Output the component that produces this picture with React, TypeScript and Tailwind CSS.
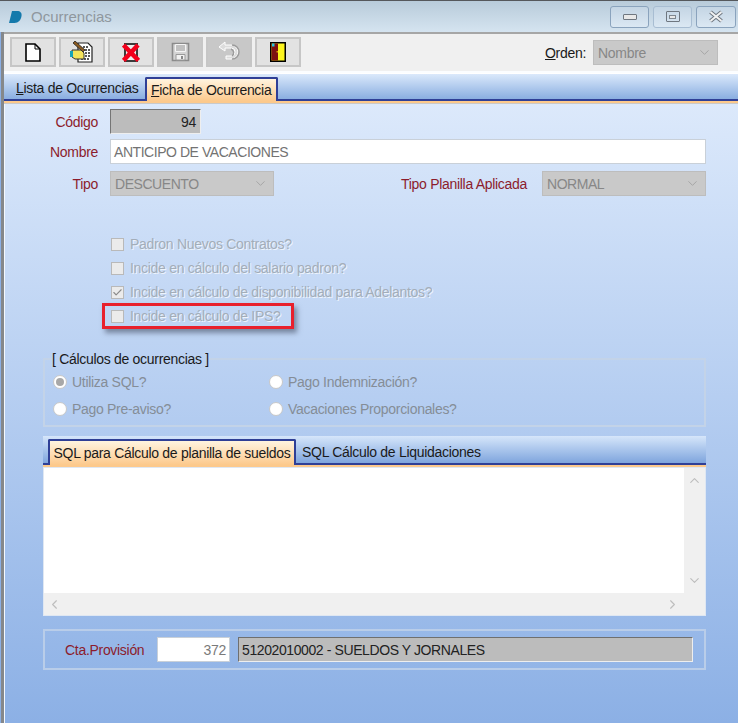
import { ChevronDown, ChevronUp, ChevronLeft, ChevronRight, Check } from "lucide-react";

function ToolButton({ disabled, children }: { disabled?: boolean; children: React.ReactNode }) {
  return (
    <div
      className={`w-[46px] h-[30px] flex items-center justify-center border-2 border-[#c6c6c6] ${
        disabled ? "bg-[#c8c8c8]" : "bg-[#e2e2e2]"
      }`}
    >
      {children}
    </div>
  );
}

function NewIcon() {
  return (
    <svg width="16" height="19" viewBox="0 0 16 19">
      <path d="M1 1h9l5 5v12H1z" fill="#fff" stroke="#000" strokeWidth="1.6" />
      <path d="M10 1v5h5" fill="none" stroke="#000" strokeWidth="1" />
    </svg>
  );
}

function EditIcon() {
  return (
    <svg width="24" height="22" viewBox="0 0 24 22">
      <path d="M8 2h10l4 4v15H8z" fill="#fff" stroke="#222" strokeWidth="1.2" />
      <path d="M13 6h5M15 9h5M15 12h5M15 15h5M11 18h9" stroke="#222" strokeWidth="1.3" strokeDasharray="2 1" />
      <path d="M5 0l10 9-2 2L3 2z" fill="#8a5a20" stroke="#222" strokeWidth="0.8" />
      <path d="M2 9h9l3 3v6H5l-3-2z" fill="#f4e35a" stroke="#333" strokeWidth="1" />
      <path d="M0 10h3v6H0z" fill="#16a3b8" />
    </svg>
  );
}

function DeleteIcon() {
  return (
    <svg width="18" height="21" viewBox="0 0 18 21">
      <path d="M2 1h14v19H2z" fill="#3b3b3b" />
      <path d="M4 3h10v15H4z" fill="#eee" />
      <path d="M1.5 3L16.5 18.5M16 3L1.5 18.5" stroke="#f2001c" strokeWidth="4.6" />
    </svg>
  );
}

function SaveIcon() {
  return (
    <svg width="19" height="20" viewBox="0 0 19 20">
      <path d="M1.5 1.5h16v17h-16z" fill="#d4d4d4" stroke="#8b8b8b" strokeWidth="1.6" />
      <path d="M4.5 2.5h10v7h-10z" fill="#c0c0c0" stroke="#f4f4f4" strokeWidth="1" />
      <path d="M5 12.5h9v5.5H5z" fill="#f2f2f2" stroke="#9a9a9a" strokeWidth="1" />
      <path d="M10 14h2v3h-2z" fill="#888" />
    </svg>
  );
}

function UndoIcon() {
  return (
    <svg width="22" height="22" viewBox="0 0 22 22">
      <path d="M1 6l6-5v3h6a7 7 0 0 1 0 14H8v-3h5a4 4 0 0 0 0-8H7v3z" fill="#dcdcdc" stroke="#fff" strokeWidth="1" />
      <path d="M14 4a7 7 0 0 1 0 14M13 8a4 4 0 0 1 1 7" fill="none" stroke="#9b9b9b" strokeWidth="1.4" />
    </svg>
  );
}

function DoorIcon() {
  return (
    <svg width="16" height="20" viewBox="0 0 16 20">
      <path d="M0 0h16v20H0z" fill="#000" />
      <path d="M1.5 1.5h13v17h-13z" fill="#fdf51e" />
      <path d="M1.5 1.5h6.5v17H1.5z" fill="#7d1010" />
      <path d="M2 1.5h2.5v3H2z" fill="#27c6dc" />
      <path d="M6.5 9h1.5v1.5H6.5z" fill="#e0a000" />
    </svg>
  );
}

function Logo() {
  return (
    <svg width="13" height="14" viewBox="0 0 13 14">
      <path d="M3 1h5c3.5 0 5 2 4.5 5-.6 4-3 7-7 7H0z" fill="#1479ab" />
    </svg>
  );
}

function FakeSelect({ text, className }: { text: string; className: string }) {
  return (
    <div className={`h-[25px] flex items-center justify-between pl-[4px] pr-[5px] bg-[#c9c9c9] border border-[#bdbdbd] text-[#878787] ${className}`}>
      <span>{text}</span>
      <ChevronDown size={15} strokeWidth={1.2} color="#9a9a9a" />
    </div>
  );
}

function CheckRow({ text, checked }: { text: string; checked?: boolean }) {
  return (
    <div className="h-[24px] flex items-center gap-[6px] text-[#a3adb9] [text-shadow:1px_1px_0_#eef4fc]">
      <div className="w-[13px] h-[13px] flex items-center justify-center bg-[#ebebeb] border border-[#b9b9b9]">
        {checked && <Check size={11} strokeWidth={2.4} color="#8a8a8a" />}
      </div>
      <span>{text}</span>
    </div>
  );
}

function Radio({ text, selected, className }: { text: string; selected?: boolean; className?: string }) {
  return (
    <div className={`h-[14px] flex items-center gap-[5px] text-[#858d97] ${className ?? ""}`}>
      <div className="w-[14px] h-[14px] rounded-full bg-white border border-[#c8c8c8] flex items-center justify-center">
        {selected && <div className="w-[8px] h-[8px] rounded-full bg-[#a8a8a8]" />}
      </div>
      <span>{text}</span>
    </div>
  );
}

export default function App() {
  return (
    <div className="w-[738px] h-[723px] overflow-hidden flex flex-col text-[14px] leading-none whitespace-nowrap bg-[#8cb0e5] font-['Liberation_Sans',sans-serif] tracking-[-0.3px]">
      {/* Title bar */}
      <div className="h-[32px] shrink-0 flex items-center justify-between pl-[9px] pr-[2px] border-t border-[#55585c] bg-gradient-to-b from-[#b8cbda] to-[#d5e4f0]">
        <div className="flex items-center gap-[9px]">
          <Logo />
          <span className="text-[15px] tracking-normal text-[#8f979e]">Ocurrencias</span>
        </div>
        <div className="flex gap-[4px]">
          <div className="w-[39px] h-[22px] flex items-center justify-center rounded-[3px] border border-[#8aa3bd] bg-gradient-to-b from-[#c4d5e4] to-[#dbe8f3]">
            <div className="w-[14px] h-[6px] rounded-[1px] bg-[#e8e8e8] border border-[#6f7780]" />
          </div>
          <div className="w-[39px] h-[22px] flex items-center justify-center rounded-[3px] border border-[#a8bdd2] bg-gradient-to-b from-[#c4d5e4] to-[#dbe8f3]">
            <div className="w-[14px] h-[11px] rounded-[1px] border-[1.5px] border-[#6f7780] flex items-center justify-center">
              <div className="w-[7px] h-[4px] bg-[#e8e8e8] border border-[#7f878f]" />
            </div>
          </div>
          <div className="w-[40px] h-[22px] flex items-center justify-center rounded-[3px] border border-[#8aa3bd] bg-gradient-to-b from-[#c4d5e4] to-[#dbe8f3]">
            <svg width="16" height="13" viewBox="0 0 16 13">
              <path d="M2.5 2l11 9M13.5 2l-11 9" stroke="#6f7780" strokeWidth="4" />
              <path d="M2.5 2l11 9M13.5 2l-11 9" stroke="#f2f2f2" strokeWidth="2" />
            </svg>
          </div>
        </div>
      </div>

      <div className="flex-1 ml-[1px] border-l-[3px] border-[#85888b] flex flex-col min-h-0">
        {/* Toolbar */}
        <div className="h-[41px] shrink-0 flex items-start justify-between pt-[3px] pl-[6px] pr-[20px] border-t-2 border-b-2 border-t-[#a6a6a6] border-b-[#fbfdff] bg-[#f0f0f0]">
          <div className="flex gap-[3px]">
            <ToolButton><NewIcon /></ToolButton>
            <ToolButton><EditIcon /></ToolButton>
            <ToolButton><DeleteIcon /></ToolButton>
            <ToolButton disabled><SaveIcon /></ToolButton>
            <ToolButton disabled><UndoIcon /></ToolButton>
            <ToolButton><DoorIcon /></ToolButton>
          </div>
          <div className="flex items-center gap-[7px] mt-[3px]">
            <span className="text-[#1a1a1a]"><span className="underline">O</span>rden:</span>
            <FakeSelect text="Nombre" className="w-[125px]" />
          </div>
        </div>

        {/* Main tabs */}
        <div className="h-[28px] shrink-0 flex items-end pl-[7px] border-t border-[#ffffff] border-b-2 border-b-[#2f3f96] bg-gradient-to-b from-[#dbe9fb] to-[#8aaee0]">
          <div className="h-[24px] w-[134px] pl-[5px] pt-[2px] flex items-center text-[#1a1a1a]">
            <span><span className="underline">L</span>ista de Ocurrencias</span>
          </div>
          <div className="h-[24px] -mb-[2px] w-[133px] pl-[4px] flex items-center rounded-t-[2px] border-2 border-b-0 border-[#2f3f96] text-[#1a1a1a] bg-gradient-to-b from-[#fff4df] to-[#fcc98c]">
            <span><span className="underline">F</span>icha de Ocurrencia</span>
          </div>
        </div>
        <div className="h-[3px] shrink-0 bg-[#fcc98c] border-b border-[#c9c9c9]" />

        {/* Form body */}
        <div className="relative flex-1 min-h-0 pt-[5px] pl-[38px] pr-[32px] border-l border-[#f4f8fd] bg-gradient-to-b from-[#dce9fb] to-[#8cb0e5]">
          <div className="pl-[67px] flex flex-col">
            <div className="flex items-center h-[25px]">
              <span className="w-[55px] -ml-[67px] mr-[12px] text-right text-[#8c1c2c]">Código</span>
              <div className="w-[91px] h-[25px] flex items-center justify-end pr-[4px] bg-[#bcbcbc] border border-[#757575] border-r-[#eeeeee] border-b-[#eeeeee] text-[#222]">94</div>
            </div>
            <div className="flex items-center h-[25px] mt-[5px]">
              <span className="w-[55px] -ml-[67px] mr-[12px] text-right text-[#8c1c2c]">Nombre</span>
              <div className="flex-1 h-[25px] flex items-center pl-[3px] bg-white border border-[#c9d0d8] text-[#737373] tracking-[-0.45px]">ANTICIPO DE VACACIONES</div>
            </div>
            <div className="flex items-center h-[25px] mt-[7px]">
              <span className="w-[55px] -ml-[67px] mr-[12px] text-right text-[#8c1c2c]">Tipo</span>
              <FakeSelect text="DESCUENTO" className="w-[164px] tracking-[-0.45px]" />
              <span className="ml-auto mr-[15px] text-[#8c1c2c]">Tipo Planilla Aplicada</span>
              <FakeSelect text="NORMAL" className="w-[164px] tracking-[-0.45px]" />
            </div>
            <div className="flex flex-col mt-[36px] pl-[1px]">
              <CheckRow text="Padron Nuevos Contratos?" />
              <CheckRow text="Incide en cálculo del salario padron?" />
              <CheckRow text="Incide en cálculo de disponibilidad para Adelantos?" checked />
              <CheckRow text="Incide en cálculo de IPS?" />
            </div>
          </div>

          {/* Highlight drawn over the checkbox */}
          <div className="absolute left-[97px] top-[199px] w-[192px] h-[26px] border-[3px] border-[#e8202c] shadow-[3px_4px_5px_rgba(60,70,90,0.55)]" />

          <fieldset className="mt-[24px] h-[75px] border-2 border-[#c3d3e8] pl-[8px]">
            <legend className="px-0 -ml-[1px] text-[#1a1a1a] -mb-[2px]">[ Cálculos de ocurrencias ]</legend>
            <div className="grid grid-cols-[216px_1fr] gap-y-[13px] mt-[11px]">
              <Radio text="Utiliza SQL?" selected />
              <Radio text="Pago Indemnización?" />
              <Radio text="Pago Pre-aviso?" />
              <Radio text="Vacaciones Proporcionales?" />
            </div>
          </fieldset>

          {/* SQL tabs */}
          <div className="mt-[9px] h-[29px] flex items-end pl-[5px] border-b-2 border-b-[#2f3f96] bg-gradient-to-b from-[#d6e6fa] to-[#7fa5dd]">
            <div className="h-[26px] -mb-[2px] w-[248px] flex items-center justify-center rounded-t-[2px] border-2 border-b-0 border-[#2f3f96] text-[#1a1a1a] bg-gradient-to-b from-[#fff4df] to-[#fcc98c]">
              SQL para Cálculo de planilla de sueldos
            </div>
            <div className="h-[24px] pl-[6px] pt-[1px] flex items-center text-[#1a1a1a]">SQL Cálculo de Liquidaciones</div>
          </div>
          <div className="h-[2px] bg-[#fcc98c]" />

          <div className="h-[149px] flex flex-col border border-[#dfe7f2] bg-[#f0f0f0]">
            <div className="flex-1 min-h-0 flex">
              <div className="flex-1 bg-white" />
              <div className="w-[21px] flex flex-col items-center justify-between py-[5px]">
                <ChevronUp size={15} strokeWidth={1.8} color="#bdbdbd" />
                <ChevronDown size={15} strokeWidth={1.8} color="#bdbdbd" />
              </div>
            </div>
            <div className="h-[22px] shrink-0 flex items-center justify-between pl-[3px] pr-[25px]">
              <ChevronLeft size={15} strokeWidth={1.8} color="#bdbdbd" />
              <ChevronRight size={15} strokeWidth={1.8} color="#bdbdbd" />
            </div>
          </div>

          {/* Account */}
          <div className="mt-[13px] h-[41px] flex items-center border-2 border-[#b9cde9] pl-[20px] pr-[11px]">
            <span className="w-[92px] text-[#8c1c2c]">Cta.Provisión</span>
            <div className="w-[73px] h-[25px] flex items-center justify-end pr-[3px] bg-white border border-[#c9d0d8] text-[#7a7a7a]">372</div>
            <div className="flex-1 ml-[8px] h-[25px] flex items-center pl-[3px] bg-[#bcbcbc] border border-[#6f6f6f] border-r-[#eeeeee] border-b-[#eeeeee] text-[#222] tracking-[-0.4px]">51202010002 - SUELDOS Y JORNALES</div>
          </div>
        </div>
      </div>
    </div>
  );
}
